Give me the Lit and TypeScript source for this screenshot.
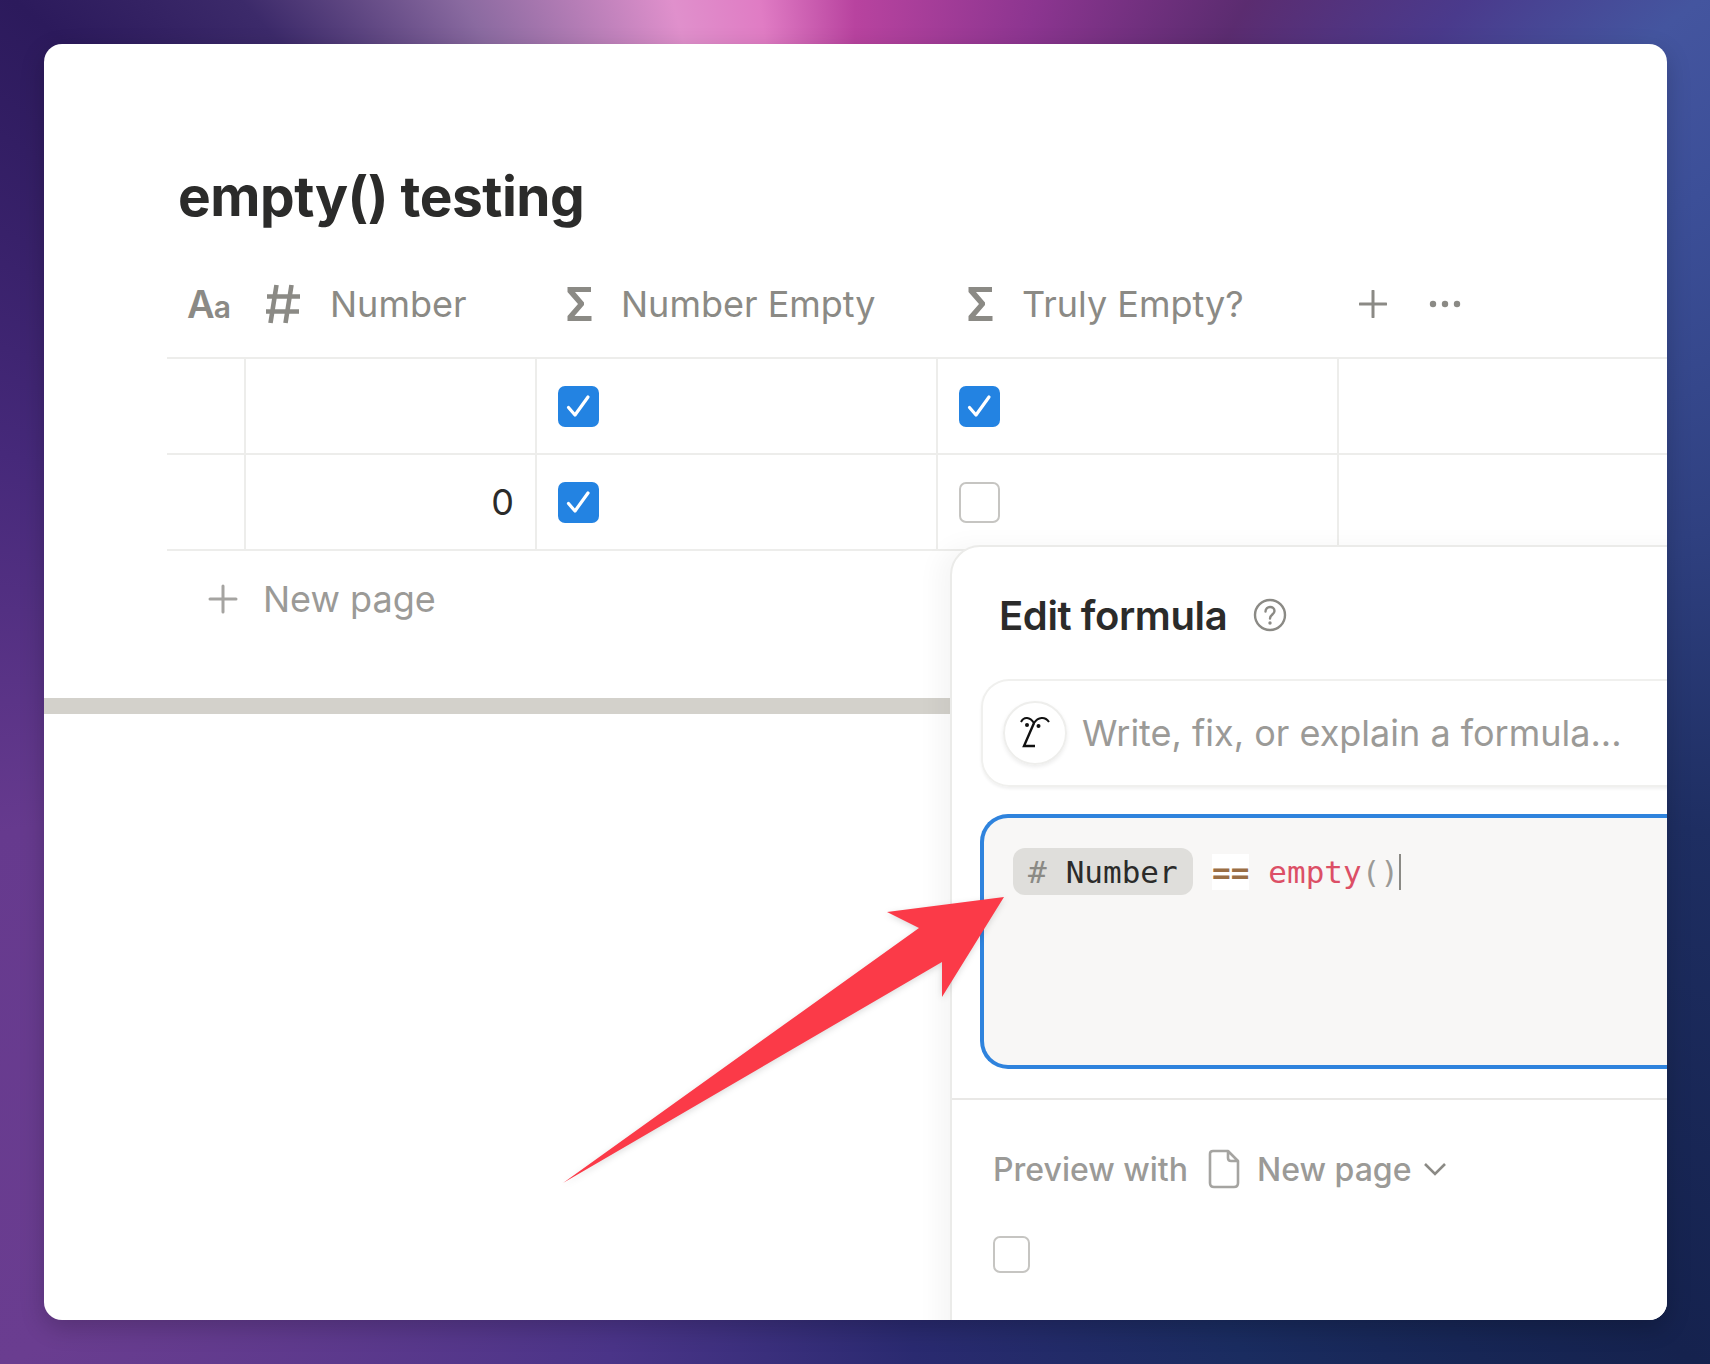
import { LitElement, html, css, svg } from 'lit'
import { customElement } from 'lit/decorators.js'

const check = svg`<path d="M10.5 21.5 L17 29 L30 11" fill="none" stroke="#fff" stroke-width="3.2" stroke-linecap="round" stroke-linejoin="round"/>`

const sigma = html`<svg class="sigma" viewBox="0 0 25 34"><path d="M0.5 0 H24 V5 H8 L17 15.5 V18 L7.5 29 H24.5 V34 H0.5 V29 L11 17 L0.5 5 Z" fill="#8b8a85"/></svg>`

@customElement('app-root')
export class AppRoot extends LitElement {
  static styles = css`
    :host {
      display: block;
      width: 1710px;
      height: 1364px;
      box-sizing: border-box;
      padding: 44px 43px 44px 44px;
      font-family: Inter, "Liberation Sans", sans-serif;
      background: conic-gradient(from 0deg at 855px 682px,
        #b8439f 0deg, #8c3590 15deg, #5b2c70 30deg, #4a3a8c 42deg, #44559f 51deg,
        #3c4f98 60deg, #2f4080 80deg, #1e2e62 100deg, #15224e 129deg,
        #1a2c60 150deg, #2a2a70 175deg, #4a3488 200deg, #6a3d90 231deg,
        #663a8e 260deg, #46297a 285deg, #2c1a5c 309deg, #3c2a6a 318deg,
        #8a6aa0 330deg, #e090cc 345deg, #e07cc4 352deg, #b8439f 360deg);
    }

    .window {
      position: relative;
      height: 1276px;
      background: #fff;
      border-radius: 18px;
      overflow: hidden;
      box-shadow: 0 8px 24px rgba(0, 0, 0, 0.2);
    }

    .doc {
      padding: 119px 0 0 134px;
      height: 670px;
      box-sizing: border-box;
      border-bottom: 16px solid #d3d1cb;
    }

    h1 {
      margin: 0;
      font-size: 55px;
      line-height: 66px;
      font-weight: 700;
      letter-spacing: -0.5px;
      color: #2b2b2a;
    }

    .table {
      margin: 22px 0 0 -11px;
      color: #8b8a85;
      font-size: 36px;
    }

    .head {
      display: grid;
      grid-template-columns: 77px 291px 401px 401px auto;
      height: 106px;
      align-items: center;
      border-bottom: 2px solid #ededeb;
    }

    .head > div {
      display: flex;
      align-items: center;
    }

    .row {
      display: grid;
      grid-template-columns: 77px 291px 401px 401px 1fr;
      height: 94px;
      border-bottom: 2px solid #ededeb;
    }

    .row > div {
      display: flex;
      align-items: center;
      border-left: 2px solid #ededeb;
      padding-left: 21px;
    }

    .row > div:first-child {
      border-left: 0;
    }

    .row .num {
      justify-content: flex-end;
      padding: 0 21px 0 0;
      color: #2b2b2a;
    }

    .aa {
      margin-left: 20px;
      font-size: 38px;
      font-weight: 600;
      letter-spacing: -1px;
    }

    .aa small {
      font-size: 30px;
      font-weight: 600;
    }

    .hash {
      margin-left: 21px;
      width: 36px;
      height: 40px;
      flex: none;
    }

    .sigma {
      width: 25px;
      height: 34px;
      flex: none;
      margin-left: 32px;
    }

    .label {
      margin-left: 29px;
      white-space: nowrap;
    }

    .sigma + .label {
      margin-left: 29px;
    }

    .actions {
      gap: 42px;
      margin-left: 22px;
    }

    .box {
      width: 41px;
      height: 41px;
      flex: none;
      display: block;
      border-radius: 7px;
      background: #2383e2;
    }

    .box.off {
      box-sizing: border-box;
      background: #fff;
      border: 2px solid #c6c5c2;
    }

    .new {
      display: flex;
      align-items: center;
      margin: 26px 0 0 30px;
      color: #9b9a97;
      font-size: 36px;
      line-height: 44px;
    }

    .new span {
      margin-left: 25px;
    }

    .popup {
      position: absolute;
      left: 906px;
      top: 501px;
      width: 760px;
      height: 800px;
      background: #fff;
      border: 2px solid #ebebe9;
      border-radius: 30px 0 0 0;
      box-shadow: -12px 0 24px rgba(15, 15, 15, 0.04);
    }

    .title {
      display: flex;
      align-items: center;
      margin: 44px 0 0 47px;
      height: 48px;
      color: #2b2b2a;
      font-size: 40px;
      font-weight: 600;
      letter-spacing: -0.4px;
    }

    .help {
      margin-left: 26px;
      width: 34px;
      height: 34px;
    }

    .ask {
      display: flex;
      align-items: center;
      box-sizing: border-box;
      margin: 40px 0 0 29px;
      height: 108px;
      border: 2px solid #f0f0ee;
      border-radius: 28px 0 0 28px;
      border-right: 0;
      box-shadow: 0 2px 3px rgba(15, 15, 15, 0.06);
      color: #9b9a97;
      font-size: 36px;
      white-space: nowrap;
    }

    .face {
      display: flex;
      align-items: center;
      justify-content: center;
      width: 64px;
      height: 64px;
      box-sizing: border-box;
      margin-left: 20px;
      margin-right: 15px;
      flex: none;
      border: 2px solid #eeeeec;
      border-radius: 50%;
      box-shadow: 0 2px 4px rgba(15, 15, 15, 0.08);
    }

    .face svg {
      width: 32px;
      height: 34px;
    }

    .editor {
      box-sizing: border-box;
      margin: 27px 0 0 28px;
      height: 255px;
      padding: 30px 0 0 29px;
      background: #f8f7f6;
      border: 4px solid #2f83dd;
      border-right: 0;
      border-radius: 28px 0 0 28px;
      font-family: "DejaVu Sans Mono", "Liberation Mono", monospace;
      font-size: 31px;
    }

    .code {
      display: flex;
      align-items: center;
      height: 47px;
      white-space: nowrap;
    }

    .chip {
      display: flex;
      align-items: center;
      height: 47px;
      width: 180px;
      box-sizing: border-box;
      padding-left: 15px;
      border-radius: 12px;
      background: #dfdedb;
      color: #2b2b2a;
    }

    .chip i {
      font-style: normal;
      color: #8b8a85;
      margin-right: 19px;
      font-weight: 200;
    }

    .op {
      margin-left: 19px;
      padding: 0;
      height: 36px;
      line-height: 36px;
      background: #fff;
      color: #9a6e45;
      font-weight: 700;
    }

    .fn {
      margin-left: 19px;
      color: #dc4f66;
    }

    .paren {
      color: #9b9a97;
    }

    .caret {
      width: 2px;
      height: 36px;
      background: #8b8a85;
    }

    .rule {
      height: 2px;
      margin-top: 29px;
      background: #e9e8e6;
    }

    .preview {
      display: flex;
      align-items: center;
      margin: 47px 0 0 41px;
      height: 44px;
      color: #9b9a97;
      font-size: 32px;
      font-weight: 500;
      white-space: nowrap;
    }

    .page {
      width: 32px;
      height: 40px;
      margin: 0 17px 0 20px;
    }

    .chev {
      width: 24px;
      height: 14px;
      margin-left: 12px;
    }

    .box.small {
      width: 37px;
      height: 37px;
      margin: 45px 0 0 41px;
    }

    .arrow {
      position: absolute;
      left: 0;
      top: 0;
      width: 1623px;
      height: 1276px;
      pointer-events: none;
      filter: drop-shadow(0 2px 3px rgba(0, 0, 0, 0.14));
    }
  `

  render () {
    return html`
      <div class="window">
        <div class="doc">
          <h1>empty() testing</h1>
          <div class="table">
            <div class="head">
              <div><span class="aa">A<small>a</small></span></div>
              <div>
                <svg class="hash" viewBox="0 0 36 40"><path d="M11.5 1 L5.5 39 M26.5 1 L20.5 39 M2 12.5 H35 M1 27.5 H34" fill="none" stroke="#8b8a85" stroke-width="4.6"/></svg>
                <span class="label">Number</span>
              </div>
              <div>${sigma}<span class="label">Number Empty</span></div>
              <div>${sigma}<span class="label">Truly Empty?</span></div>
              <div class="actions">
                <svg width="28" height="28" viewBox="0 0 28 28"><path d="M14 1 V27 M1 14 H27" stroke="#8b8a85" stroke-width="3" stroke-linecap="round"/></svg>
                <svg width="32" height="8" viewBox="0 0 32 8"><circle cx="4" cy="4" r="3.2" fill="#8b8a85"/><circle cx="16" cy="4" r="3.2" fill="#8b8a85"/><circle cx="28" cy="4" r="3.2" fill="#8b8a85"/></svg>
              </div>
            </div>
            <div class="row">
              <div></div>
              <div></div>
              <div><svg class="box" viewBox="0 0 41 41">${check}</svg></div>
              <div><svg class="box" viewBox="0 0 41 41">${check}</svg></div>
              <div></div>
            </div>
            <div class="row">
              <div></div>
              <div class="num">0</div>
              <div><svg class="box" viewBox="0 0 41 41">${check}</svg></div>
              <div><span class="box off"></span></div>
              <div></div>
            </div>
          </div>
          <div class="new">
            <svg width="30" height="30" viewBox="0 0 30 30"><path d="M15 2 V28 M2 15 H28" stroke="#a5a4a1" stroke-width="3" stroke-linecap="round"/></svg>
            <span>New page</span>
          </div>
        </div>

        <div class="popup">
          <div class="title">
            Edit formula
            <svg class="help" viewBox="0 0 34 34">
              <circle cx="17" cy="17" r="15" fill="none" stroke="#8b8a85" stroke-width="2.4"/>
              <path d="M12.5 13.5 C12.5 7.5 21.5 7.5 21.5 13 C21.5 16.5 17 16.5 17 20.5" fill="none" stroke="#8b8a85" stroke-width="2.4" stroke-linecap="round"/>
              <circle cx="17" cy="25" r="1.7" fill="#8b8a85"/>
            </svg>
          </div>
          <div class="ask">
            <span class="face">
              <svg viewBox="0 0 32 34">
                <path d="M2 6 C5 0 11 1 15 7 C19 1 26 0 30 6" fill="none" stroke="#111" stroke-width="2"/>
                <path d="M15 7 L5 30 H16" fill="none" stroke="#111" stroke-width="2.4"/>
                <circle cx="8" cy="9" r="2" fill="#111"/>
                <circle cx="19.5" cy="10" r="2" fill="#111"/>
              </svg>
            </span>
            Write, fix, or explain a formula...
          </div>
          <div class="editor">
            <div class="code">
              <span class="chip"><i>#</i>Number</span>
              <span class="op">==</span>
              <span class="fn">empty</span><span class="paren">()</span><span class="caret"></span>
            </div>
          </div>
          <div class="rule"></div>
          <div class="preview">
            Preview with
            <svg class="page" viewBox="0 0 32 40">
              <path d="M5 2 H20 L30 12 V34 Q30 38 26 38 H6 Q2 38 2 34 V5 Q2 2 5 2 Z M20 2 V9 Q20 12 23 12 H30" fill="none" stroke="#a5a4a1" stroke-width="2.6" stroke-linejoin="round"/>
            </svg>
            New page
            <svg class="chev" viewBox="0 0 24 14"><path d="M2 2 L12 12 L22 2" fill="none" stroke="#8b8a85" stroke-width="2.6"/></svg>
          </div>
          <span class="box off small"></span>
        </div>

        <svg class="arrow" viewBox="0 0 1623 1276">
          <path d="M960 853 L843 868 L875 884 L519 1139 L898 918 L898 953 Z" fill="#fb3a48"/>
        </svg>
      </div>
    `
  }
}
